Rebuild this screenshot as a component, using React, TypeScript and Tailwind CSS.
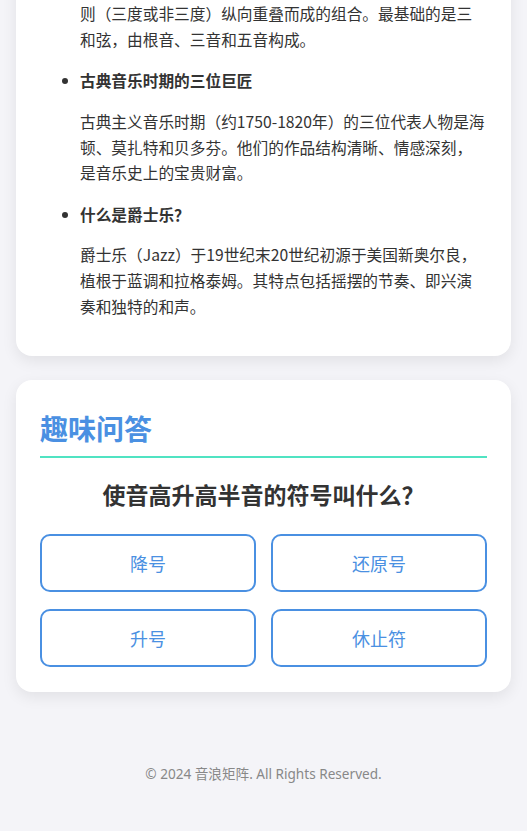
import React from 'react';

const CJK = { fontFamily: '"Noto Sans CJK SC", "Noto Sans", sans-serif' };
const LATIN = { fontFamily: '"Noto Sans", "Noto Sans CJK SC", sans-serif' };

interface TopicProps {
  title: string;
  lines: string[];
}

// lines are broken the same way the screenshot wraps them
const Topic: React.FC<TopicProps> = ({ title, lines }) => (
  <li className="relative mb-[16px] last:mb-[13px] before:absolute before:top-[10px] before:left-[-18px] before:h-[6px] before:w-[6px] before:rounded-full before:bg-[#333] before:content-['']">
    <h4 className="mb-[15px] text-[15.7px] leading-[25.6px] font-bold text-[#333]">{title}</h4>
    <p className="text-[15.7px] leading-[25.6px] text-[#333]">
      {lines.map((l, i) => (
        <React.Fragment key={i}>
          {i > 0 && <br />}
          {l}
        </React.Fragment>
      ))}
    </p>
  </li>
);

const topics: TopicProps[] = [
  {
    title: '什么是和弦？',
    lines: [
      '和弦是指由三个或三个以上的音，按照一定的音程关系规',
      '则（三度或非三度）纵向重叠而成的组合。最基础的是三',
      '和弦，由根音、三音和五音构成。',
    ],
  },
  {
    title: '古典音乐时期的三位巨匠',
    lines: [
      '古典主义音乐时期（约1750-1820年）的三位代表人物是海',
      '顿、莫扎特和贝多芬。他们的作品结构清晰、情感深刻，',
      '是音乐史上的宝贵财富。',
    ],
  },
  {
    title: '什么是爵士乐？',
    lines: [
      '爵士乐（Jazz）于19世纪末20世纪初源于美国新奥尔良，',
      '植根于蓝调和拉格泰姆。其特点包括摇摆的节奏、即兴演',
      '奏和独特的和声。',
    ],
  },
];

const options = ['降号', '还原号', '升号', '休止符'];

export default function App() {
  return (
    <div className="min-h-screen bg-[#f4f4f8] leading-[1.6]" style={CJK}>
      <main className="px-4">
        <section className="-mt-[89px] rounded-2xl bg-white px-6 pt-6 pb-6 shadow-[0_5px_15px_rgba(0,0,0,0.08)]">
          <ul className="list-none pl-10">
            {topics.map((t) => (
              <Topic key={t.title} {...t} />
            ))}
          </ul>
        </section>

        <section className="mt-[24px] rounded-2xl bg-white px-6 pt-[25px] pb-[25px] shadow-[0_5px_15px_rgba(0,0,0,0.08)]">
          <h2 className="border-b-2 border-[#50e3c2] pb-[5px] text-[28px] leading-[46px] font-bold text-[#4a90e2]">趣味问答</h2>
          <h3 className="mt-[17px] mb-[21px] text-center text-[23px] leading-[38px] font-bold text-[#333]">使音高升高半音的符号叫什么？</h3>
          <div className="grid grid-cols-2 gap-x-[15px] gap-y-[17px]">
            {options.map((o) => (
              <button
                key={o}
                className="h-[58px] rounded-[10px] border-2 border-[#4a90e2] bg-white text-[18px] text-[#4a90e2]"
                style={CJK}
              >
                {o}
              </button>
            ))}
          </div>
        </section>
      </main>

      <footer className="pt-[71px] pb-[46px] text-center text-[13.6px] text-[#888]" style={LATIN}>
        © 2024 音浪矩阵. All Rights Reserved.
      </footer>
    </div>
  );
}
